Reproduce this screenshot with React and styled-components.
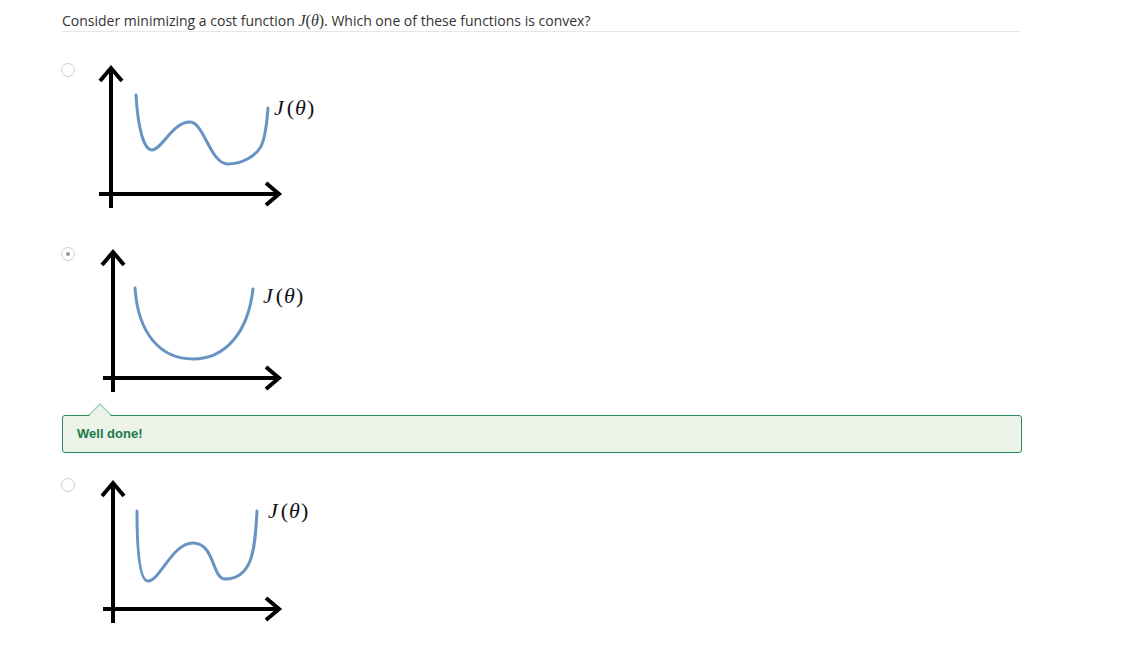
import React from "react";
import styled, { createGlobalStyle } from "styled-components";

const GlobalStyle = createGlobalStyle`
  html, body {
    margin: 0;
    padding: 0;
    background: #ffffff;
  }
`;

const Page = styled.div`
  padding: 0 0 0 62px;
  width: 960px;
  font-family: "Open Sans", "Liberation Sans", sans-serif;
  color: #333333;
`;

const Question = styled.div`
  padding-top: 11px;
  font-size: 14px;
  line-height: 20px;
  border-bottom: 1px solid #e6e6e6;
  width: 959px;
`;

const MathVar = styled.span`
  font-family: "Liberation Serif", "DejaVu Serif", serif;
  font-size: 16px;
  font-style: ${(props) => (props.italic ? "italic" : "normal")};
`;

const Options = styled.div`
  display: flex;
  flex-direction: column;
`;

const Option = styled.div`
  display: flex;
  align-items: flex-start;
  gap: 15px;
  margin-top: ${(props) => props.top}px;
  height: 150px;
`;

const Radio = styled.span`
  box-sizing: border-box;
  width: 14px;
  height: 14px;
  margin-top: 4px;
  margin-left: -1px;
  border-radius: 50%;
  border: 1px solid #cfcfcf;
  background: #ffffff;
  display: flex;
  align-items: center;
  justify-content: center;

  &::after {
    content: "";
    display: ${(props) => (props.checked ? "block" : "none")};
    width: 4px;
    height: 4px;
    border-radius: 50%;
    background: #9a9a9a;
  }
`;

const Feedback = styled.div`
  position: relative;
  margin-top: 22px;
  box-sizing: border-box;
  width: 960px;
  padding: 9px 14px;
  border: 1px solid #2b8a55;
  border-radius: 3px;
  background: #ecf3e8;
  color: #1b7a46;
  font-family: "Liberation Sans", Arial, sans-serif;
  font-weight: bold;
  font-size: 13px;
  line-height: 18px;

  &::before {
    content: "";
    position: absolute;
    left: 25px;
    top: -13px;
    border-left: 12px solid transparent;
    border-right: 12px solid transparent;
    border-bottom: 12px solid #9ed3b3;
  }

  &::after {
    content: "";
    position: absolute;
    left: 26px;
    top: -11px;
    border-left: 11px solid transparent;
    border-right: 11px solid transparent;
    border-bottom: 11px solid #ecf3e8;
  }
`;

const Graph = ({ axisX, axisStart, curve, label }) => {
  const yTop = 8;
  const yAxis = 135;
  const xEnd = 189;
  return (
    <svg width="240" height="150" viewBox="0 0 240 150">
      <g stroke="#000" strokeWidth="4" fill="none" strokeLinecap="butt" strokeLinejoin="miter">
        <line x1={axisX} y1={yTop + 1} x2={axisX} y2="149" />
        <polyline points={`${axisX - 11},${yTop + 14} ${axisX},${yTop + 1} ${axisX + 11},${yTop + 14}`} />
        <line x1={axisStart} y1={yAxis} x2={xEnd - 1} y2={yAxis} />
        <polyline points={`${xEnd - 13},${yAxis - 11} ${xEnd},${yAxis} ${xEnd - 13},${yAxis + 11}`} />
      </g>
      <path d={curve} stroke="#6794c2" strokeWidth="3" fill="none" strokeLinecap="round" />
      <text
        x={label.x}
        y={label.y}
        fontFamily="'Liberation Serif', 'DejaVu Serif', serif"
        fontSize="22"
        fill="#111"
      >
        <tspan fontStyle="italic">J</tspan>
        <tspan dx="3">(</tspan>
        <tspan fontStyle="italic" dx="1">θ</tspan>
        <tspan dx="1">)</tspan>
      </text>
    </svg>
  );
};

const graphs = [
  {
    top: 27,
    checked: false,
    axisX: 21,
    axisStart: 9,
    curve:
      "M46,36 C48,70 54,91 62,91 C72,91 82,63 100,63 C114,63 120,105 138,105 C152,105 165,97 170,89 C176,80 177,60 178,49",
    label: { x: 184, y: 56 },
  },
  {
    top: 34,
    checked: true,
    axisX: 23,
    axisStart: 13,
    curve: "M45,45 C48,90 70,116 103,116 C135,116 158,90 163,46",
    label: { x: 173, y: 60 },
  },
];

const third = {
  top: 21,
  checked: false,
  axisX: 23,
  axisStart: 13,
  curve:
    "M47,37 C47,80 50,107 58,107 C70,107 82,69 103,69 C125,69 122,105 135,105 C148,105 156,97 160,87 C165,75 166,55 167,37",
  label: { x: 178, y: 44 },
};

const OptionRow = ({ item }) => (
  <Option top={item.top}>
    <Radio checked={item.checked} />
    <Graph axisX={item.axisX} axisStart={item.axisStart} curve={item.curve} label={item.label} />
  </Option>
);

const App = () => (
  <>
    <GlobalStyle />
    <Page>
      <Question>
        Consider minimizing a cost function <MathVar italic>J</MathVar>
        <MathVar>(</MathVar>
        <MathVar italic>θ</MathVar>
        <MathVar>)</MathVar>. Which one of these functions is convex?
      </Question>
      <Options>
        {graphs.map((item, i) => (
          <OptionRow key={i} item={item} />
        ))}
        <Feedback>Well done!</Feedback>
        <OptionRow item={third} />
      </Options>
    </Page>
  </>
);

export default App;
